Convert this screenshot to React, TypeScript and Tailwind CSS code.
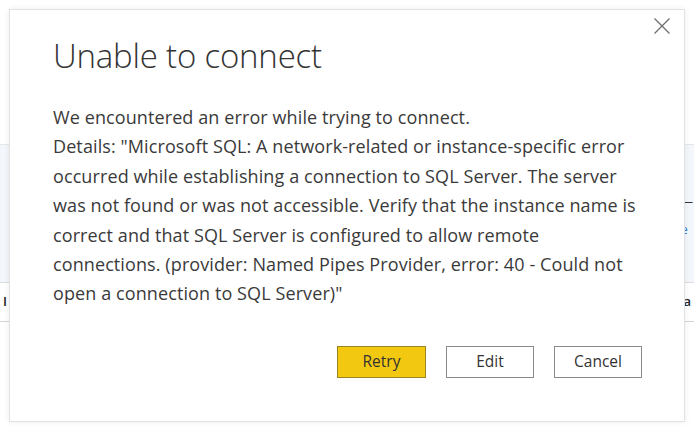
import React from "react";

const lines = [
  "We encountered an error while trying to connect.",
  'Details: "Microsoft SQL: A network-related or instance-specific error',
  "occurred while establishing a connection to SQL Server. The server",
  "was not found or was not accessible. Verify that the instance name is",
  "correct and that SQL Server is configured to allow remote",
  "connections. (provider: Named Pipes Provider, error: 40 - Could not",
  'open a connection to SQL Server)"',
];

export default function App() {
  return (
    <div className="relative w-[694px] h-[434px] overflow-hidden bg-white" style={{ fontFamily: '"Open Sans", "Noto Sans", sans-serif' }}>
      {/* background page content */}
      <div className="flex flex-col w-full h-full">
        <div className="h-[145px] border-b border-[#e6e6e6]"></div>
        <div className="h-[138px] flex justify-between bg-[#f3f7fb] border-b border-[#dcdcdc]">
          <div></div>
          <div className="flex flex-col pt-[50px] pr-[1px] text-[12px] leading-[14px]">
            <span className="text-[#333]">—</span>
            <span className="text-[#2b7bd1] mt-[14px]">e</span>
          </div>
        </div>
        <div className="h-[39px] flex justify-between items-center border-b border-[#d4d4d4] text-[13px] font-semibold text-[#222] px-[3px]">
          <span>I</span>
          <span>a</span>
        </div>
        <div className="flex-1"></div>
      </div>

      {/* dialog */}
      <div className="absolute left-[9px] top-[9px] w-[676px] h-[413px] bg-white border border-[#e2e2e2] shadow-[0_0_6px_rgba(0,0,0,0.08)] flex flex-col pl-[43px] pr-[20px]">
        <button className="absolute right-[14px] top-[8px] w-[16px] h-[16px] flex items-center justify-center">
          <svg width="16" height="16" viewBox="0 0 16 16">
            <path d="M0.5 0.5 L15.5 15.5 M15.5 0.5 L0.5 15.5" stroke="#6e6e6e" strokeWidth="1.3" fill="none" />
          </svg>
        </button>
        <h1 className="mt-[23px] text-[33px] leading-[46px] font-light text-[#333] tracking-[-0.2px]">Unable to connect</h1>
        <div className="mt-[24px] text-[18px] leading-[29.4px] text-[#3a3a3a] tracking-[0.1px]">
          {lines.map((l, i) => (
            <p key={i} className="whitespace-nowrap">{l}</p>
          ))}
        </div>
        <div className="mt-auto mb-[43px] mr-[22px] flex justify-end gap-[20px] text-[15.5px]">
          <button className="w-[89px] h-[32px] bg-[#f2c811] border border-[#9c8420] text-[#333]">Retry</button>
          <button className="w-[88px] h-[32px] bg-white border border-[#8a8a8a] text-[#333]">Edit</button>
          <button className="w-[88px] h-[32px] bg-white border border-[#8a8a8a] text-[#333]">Cancel</button>
        </div>
      </div>
    </div>
  );
}
